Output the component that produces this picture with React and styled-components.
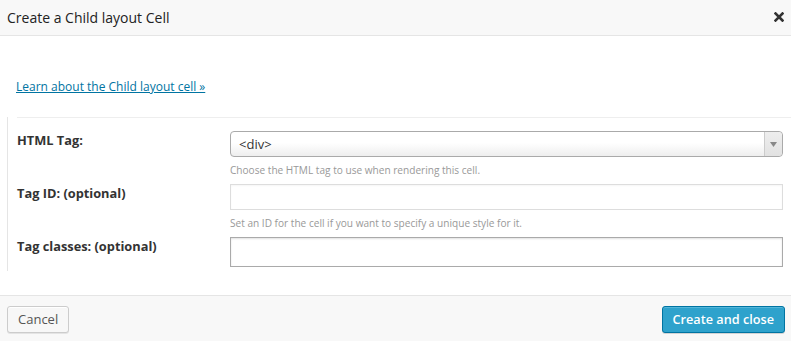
import React from "react";
import styled, { createGlobalStyle } from "styled-components";

const GlobalStyle = createGlobalStyle`
  html, body {
    margin: 0;
    padding: 0;
    background: #fff;
  }
  body {
    font-family: "Open Sans", "Liberation Sans", sans-serif;
    color: #333;
  }
`;

const Dialog = styled.div`
  width: 791px;
  height: 341px;
  display: flex;
  flex-direction: column;
  background: #fff;
`;

const Header = styled.header`
  height: 36px;
  box-sizing: border-box;
  display: flex;
  align-items: center;
  justify-content: space-between;
  padding: 0 7px;
  background: #f8f8f8;
  border-bottom: 1px solid #e5e5e5;
`;

const Title = styled.h1`
  margin: 0;
  font-size: 14px;
  font-weight: 400;
  color: #222;
`;

const Close = styled.button`
  border: 0;
  background: none;
  padding: 0;
  width: 10px;
  height: 10px;
  display: flex;
  cursor: pointer;
  margin-top: -2px;
`;

const Body = styled.main`
  flex: 1;
  padding: 38px 0 0 7px;
`;

const LearnLink = styled.a`
  display: inline-block;
  margin-left: 9px;
  font-size: 12px;
  color: #0074a2;
  text-decoration: underline;
  line-height: 18px;
`;

const Section = styled.section`
  margin-top: 21px;
  border-left: 1px solid #e5e5e5;
  padding-left: 9px;
  padding-bottom: 4px;
`;

const Table = styled.div`
  border-top: 1px solid #eee;
  padding-top: 13px;
`;

const Row = styled.div`
  display: grid;
  grid-template-columns: 213px 553px;
  align-items: start;
`;

const Label = styled.label`
  font-size: 12.8px;
  font-weight: 700;
  color: #333;
  line-height: 18px;
`;

const Field = styled.div`
  display: flex;
  flex-direction: column;
`;

const Select = styled.div`
  height: 26px;
  box-sizing: border-box;
  border: 1px solid #aaa;
  border-radius: 4px;
  background: linear-gradient(#fff 0%, #fff 45%, #eee 100%);
  display: flex;
  align-items: center;
  font-size: 13px;
  color: #333;
`;

const SelectValue = styled.span`
  flex: 1;
  padding-left: 8px;
`;

const SelectArrow = styled.span`
  width: 17px;
  height: 100%;
  border-left: 1px solid #ccc;
  background: linear-gradient(#eee, #e2e2e2);
  border-radius: 0 4px 4px 0;
  display: flex;
  align-items: center;
  justify-content: center;
`;

const Input = styled.input`
  height: ${(p) => p.$h || 26}px;
  box-sizing: border-box;
  border: 1px solid ${(p) => (p.$strong ? "#aaa" : "#ddd")};
  box-shadow: inset 0 1px 2px rgba(0, 0, 0, ${(p) => (p.$strong ? 0.12 : 0.04)});
  margin: 0;
  padding: 3px 6px;
  font-family: inherit;
  font-size: 13px;
  outline: none;
`;

const Hint = styled.p`
  margin: 0;
  padding: 7px 0 8px;
  font-size: 10.1px;
  line-height: 12px;
  color: #999;
`;

const Footer = styled.footer`
  height: 46px;
  box-sizing: border-box;
  border-top: 1px solid #e5e5e5;
  background: #f8f8f8;
  display: flex;
  align-items: flex-start;
  justify-content: space-between;
  padding: 10px 6px 0 7px;
`;

const Button = styled.button`
  height: 27px;
  box-sizing: border-box;
  padding: 0 10px 1px;
  border-radius: 3px;
  font-family: inherit;
  font-size: ${(p) => (p.$primary ? 12.7 : 13)}px;
  font-weight: ${(p) => (p.$primary ? 600 : 400)};
  cursor: pointer;
  border: 1px solid ${(p) => (p.$primary ? "#0074a2" : "#ccc")};
  background: ${(p) => (p.$primary ? "#2ea2cc" : "#f7f7f7")};
  color: ${(p) => (p.$primary ? "#fff" : "#555")};
  box-shadow: ${(p) =>
    p.$primary
      ? "inset 0 1px 0 rgba(120,200,230,.5), 0 1px 0 rgba(0,0,0,.15)"
      : "inset 0 1px 0 #fff, 0 1px 0 rgba(0,0,0,.08)"};
`;

const fields = [
  { id: "tag-id", label: "Tag ID: (optional)", hint: "Set an ID for the cell if you want to specify a unique style for it." },
];

export default function App() {
  return (
    <>
      <GlobalStyle />
      <Dialog>
        <Header>
          <Title>Create a Child layout Cell</Title>
          <Close aria-label="Close">
            <svg width="10" height="10" viewBox="0 0 10 10">
              <path d="M1.5 1.5 L8.5 8.5 M8.5 1.5 L1.5 8.5" stroke="#333" strokeWidth="2.6" strokeLinecap="square" />
            </svg>
          </Close>
        </Header>
        <Body>
          <LearnLink href="#">Learn about the Child layout cell »</LearnLink>
          <Section>
            <Table>
              <Row>
                <Label>HTML Tag:</Label>
                <Field>
                  <Select>
                    <SelectValue>&lt;div&gt;</SelectValue>
                    <SelectArrow>
                      <svg width="7" height="5" viewBox="0 0 7 5">
                        <path d="M0 0 H7 L3.5 5 Z" fill="#888" />
                      </svg>
                    </SelectArrow>
                  </Select>
                  <Hint>Choose the HTML tag to use when rendering this cell.</Hint>
                </Field>
              </Row>
              {fields.map((f) => (
                <Row key={f.id}>
                  <Label htmlFor={f.id}>{f.label}</Label>
                  <Field>
                    <Input id={f.id} type="text" />
                    <Hint>{f.hint}</Hint>
                  </Field>
                </Row>
              ))}
              <Row>
                <Label htmlFor="tag-classes">Tag classes: (optional)</Label>
                <Field>
                  <Input id="tag-classes" type="text" $h={30} $strong />
                </Field>
              </Row>
            </Table>
          </Section>
        </Body>
        <Footer>
          <Button>Cancel</Button>
          <Button $primary>Create and close</Button>
        </Footer>
      </Dialog>
    </>
  );
}
